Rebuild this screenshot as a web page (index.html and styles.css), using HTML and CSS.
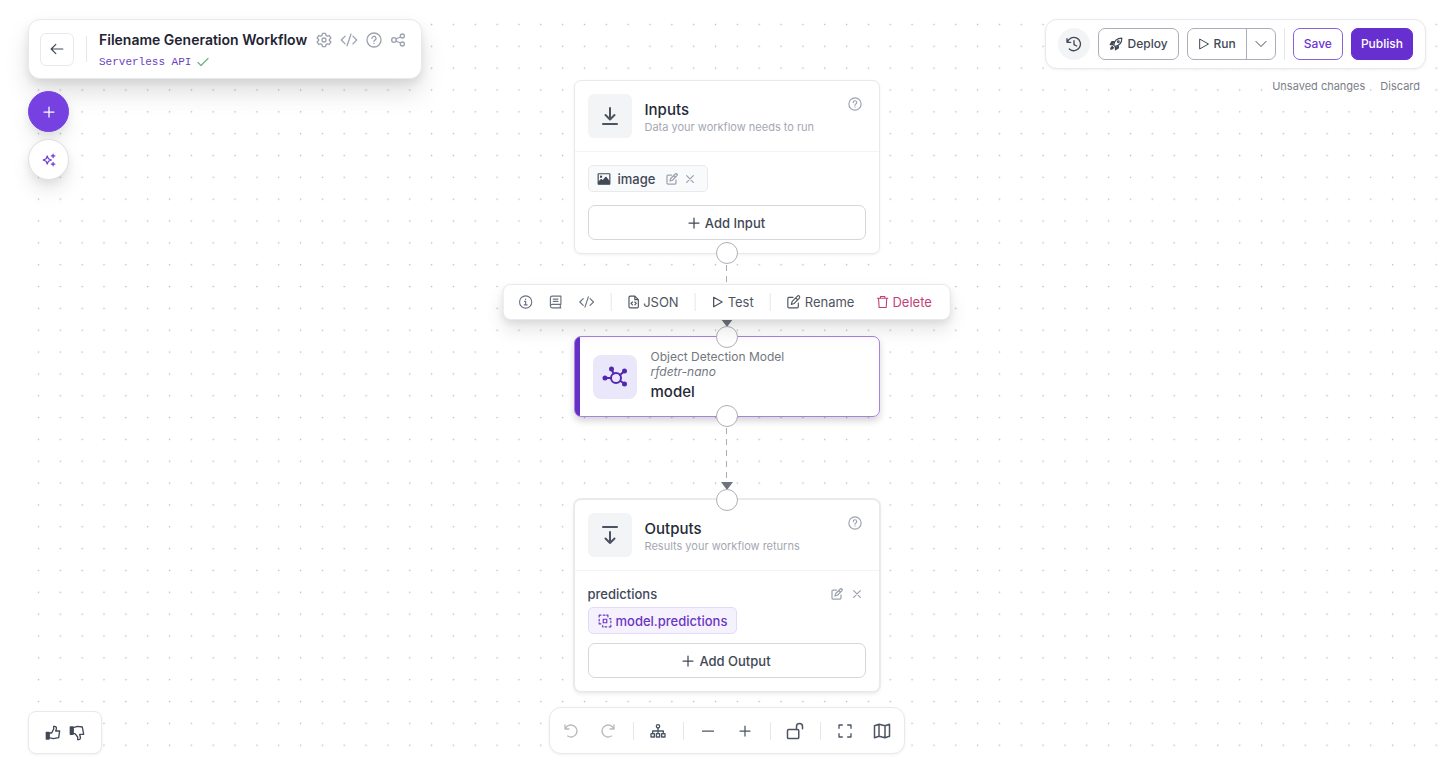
FILE: index.html
```html
<!DOCTYPE html>
<html lang="en">
<head>
<meta charset="utf-8">
<meta name="viewport" content="width=device-width, initial-scale=1">
<title>Filename Generation Workflow</title>
<link rel="stylesheet" href="styles.css">
</head>
<body>
<svg class="sprite" aria-hidden="true">
  <symbol id="i-help" viewBox="0 0 24 24"><circle cx="12" cy="12" r="10.500"/><path d="M9 9.600a3 3 0 1 1 4.400 2.500c-.9.5-1.400 1-1.400 2"/><path d="M12 17v.3"/></symbol>
  <symbol id="i-code" viewBox="0 0 28 24"><path d="M8 6l-6 6 6 6M20 6l6 6-6 6M17 3l-6 18"/></symbol>
  <symbol id="i-edit" viewBox="0 0 24 24"><path d="M11 4H4a2 2 0 0 0-2 2v14a2 2 0 0 0 2 2h14a2 2 0 0 0 2-2v-6"/><path d="M18.500 2a2.300 2.300 0 0 1 3.300 3.300L13 14.500l-5 1.500 1.500-5zM15.500 5l3.500 3.500"/></symbol>
  <symbol id="i-x" viewBox="0 0 24 24"><path d="M4 4l16 16M20 4L4 20"/></symbol>
  <symbol id="i-plus" viewBox="0 0 24 24"><path d="M12 2v20M2 12h20"/></symbol>
  <symbol id="i-play" viewBox="0 0 24 24"><path d="M4 2.500L21 12 4 21.500z"/></symbol>
</svg>

<div class="app">
  <svg class="dots" aria-hidden="true">
    <defs><pattern id="grid" width="21.84" height="21.84" patternUnits="userSpaceOnUse"><circle cx="10.500" cy="11.500" r=".8"/></pattern></defs>
    <rect width="100%" height="100%" fill="url(#grid)"/>
  </svg>

  <main class="flow">
    <section class="node">
      <header class="node-head">
        <span class="tile"><svg class="icon s20" viewBox="0 0 16 20"><path d="M8 2v11M3.500 9L8 13.500 12.500 9M1 18h14"/></svg></span>
        <div class="node-titles"><h2>Inputs</h2><p>Data your workflow needs to run</p></div>
        <button class="bare help" aria-label="Help"><svg class="icon s14"><use href="#i-help"/></svg></button>
      </header>
      <div class="node-body">
        <div class="chip">
          <svg class="icon s14" viewBox="0 0 24 24"><rect x="2" y="3" width="20" height="18" rx="1"/><path class="solid" d="M3 20v-3l4-4 3 2 5-6 6 7v4z"/><circle class="solid" cx="7" cy="8" r="1"/></svg>
          <span class="chip-name">image</span>
          <button class="bare" aria-label="Edit image"><svg class="icon s12"><use href="#i-edit"/></svg></button>
          <button class="bare" aria-label="Remove image"><svg class="icon s10"><use href="#i-x"/></svg></button>
        </div>
        <button class="add"><svg class="icon s12"><use href="#i-plus"/></svg>Add Input</button>
      </div>
      <i class="handle at-bottom"></i>
    </section>

    <div class="edge"><i class="line"></i><i class="arrow"></i>
      <div class="node-tools" role="toolbar" aria-label="Block actions">
        <button class="bare muted" aria-label="Info"><svg class="icon s14" viewBox="0 0 24 24"><circle cx="12" cy="12" r="10.500"/><path d="M12 7v.5M10 11h2v6M9.500 17h5"/></svg></button>
        <button class="bare muted" aria-label="Docs"><svg class="icon s14" viewBox="0 0 24 24"><path d="M21 16V2H6a3 3 0 0 0-3 3v14A3 3 0 0 0 6 22h15M21 16H6a3 3 0 0 0-3 3M20 16v6M8 7h8M8 11h8"/></svg></button>
        <button class="bare muted" aria-label="Code"><svg class="icon code-small"><use href="#i-code"/></svg></button>
        <i class="sep"></i>
        <button class="bare"><svg class="icon trash" viewBox="0 0 20 24"><path d="M12 2H4a2 2 0 0 0-2 2v16a2 2 0 0 0 2 2h12a2 2 0 0 0 2-2V8zM12 2v6h6M8 12l-2.500 2.500L8 17M12 12l2.500 2.500L12 17"/></svg>JSON</button>
        <i class="sep"></i>
        <button class="bare"><svg class="icon s12"><use href="#i-play"/></svg>Test</button>
        <i class="sep"></i>
        <button class="bare"><svg class="icon s14"><use href="#i-edit"/></svg>Rename</button>
        <button class="bare danger"><svg class="icon trash" viewBox="0 0 22 24"><path d="M1.500 5h19M7 5V2h8v3M3.500 5l1 17h13l1-17"/></svg>Delete</button>
      </div>
    </div>

    <section class="node model">
      <span class="tile violet"><svg class="icon net" viewBox="0 0 26 22"><circle cx="14" cy="12" r="5"/><path d="M3 12h6M9.500 3.500l2.200 4M22 5.500l-4 3.500M22 17.500l-3.500-2.500"/><circle class="solid" cx="3" cy="12" r="1.500"/><circle class="solid" cx="9.500" cy="3" r="1.500"/><circle class="solid" cx="22.500" cy="5" r="1.500"/><circle class="solid" cx="22.500" cy="18" r="1.500"/></svg></span>
      <div class="model-text"><p>Object Detection Model</p><p><em>rfdetr-nano</em></p><h2>model</h2></div>
      <i class="handle at-top"></i><i class="handle at-bottom"></i>
    </section>

    <div class="edge"><i class="line"></i><i class="arrow"></i></div>

    <section class="node outputs">
      <header class="node-head">
        <span class="tile"><svg class="icon s20" viewBox="0 0 16 20"><path d="M1 2h14M8 7v11M3.500 13.500L8 18l4.500-4.500"/></svg></span>
        <div class="node-titles"><h2>Outputs</h2><p>Results your workflow returns</p></div>
        <button class="bare help" aria-label="Help"><svg class="icon s14"><use href="#i-help"/></svg></button>
      </header>
      <div class="node-body tight">
        <div class="field">
          <span class="chip-name">predictions</span>
          <button class="bare" aria-label="Edit predictions"><svg class="icon s12"><use href="#i-edit"/></svg></button>
          <button class="bare" aria-label="Remove predictions"><svg class="icon s10"><use href="#i-x"/></svg></button>
        </div>
        <div class="chip ref">
          <svg class="icon s14" viewBox="0 0 24 24"><path d="M2 5V2h3M9 2h3M15 2h2v3M2 9v3M2 15v2h3M22 19v3h-3M15 22h-3M9 22H8v-2M22 15v-3M22 9V8h-2"/><rect x="9" y="9" width="6" height="6"/></svg>
          <span>model.predictions</span>
        </div>
        <button class="add"><svg class="icon s12"><use href="#i-plus"/></svg>Add Output</button>
      </div>
      <i class="handle at-top"></i>
    </section>
  </main>

  <div class="top">
    <div class="left">
      <div class="panel title-panel">
        <button class="back" aria-label="Back"><svg class="icon s14" viewBox="0 0 24 24"><path d="M22 12H3M10 4l-8 8 8 8"/></svg></button>
        <i class="sep tall"></i>
        <div class="title-text">
          <div class="title-row">
            <h1>Filename Generation Workflow</h1>
            <button class="bare" aria-label="Settings"><svg class="icon s16" viewBox="0 0 24 24"><path d="M9.700 2h4.600l.7 3 2 1.200 3-.9 2.300 4L20 11.400v1.200l2.300 2.100-2.300 4-3-.9-2 1.200-.7 3H9.700l-.7-3-2-1.200-3 .9-2.300-4L4 12.600v-1.200L1.700 9.300l2.300-4 3 .9L9 5z"/><circle cx="12" cy="12" r="3"/></svg></button>
            <button class="bare" aria-label="Code"><svg class="icon code"><use href="#i-code"/></svg></button>
            <button class="bare" aria-label="Help"><svg class="icon s16"><use href="#i-help"/></svg></button>
            <button class="bare" aria-label="Share"><svg class="icon s16" viewBox="0 0 24 24"><circle cx="6" cy="12" r="3.500"/><circle cx="18.500" cy="6" r="3"/><circle cx="18.500" cy="18" r="3"/><path d="M9 10.500l6.500-3M9 13.500l6.500 3"/></svg></button>
          </div>
          <a class="api" href="#api">Serverless API<svg class="icon s12 check" viewBox="0 0 24 24"><path d="M2 13l6 6L22 5"/></svg></a>
        </div>
      </div>
      <button class="round add-block" aria-label="Add block"><svg class="icon s12"><use href="#i-plus"/></svg></button>
      <button class="round ai" aria-label="Assistant"><svg class="icon s14" viewBox="0 0 24 24"><path d="M9 5l2 5 5 2-5 2-2 5-2-5-5-2 5-2zM19 2v6M16 5h6M19 16v6M16 19h6"/></svg></button>
    </div>
    <div class="right">
      <div class="panel actions">
        <button class="history" aria-label="Version history"><svg class="icon s16" viewBox="0 0 24 24"><path d="M1.500 4v5.500H7M2 9.500A10 10 0 1 1 5 19.500M12 7v6l4 2"/></svg></button>
        <button class="btn"><svg class="icon s14" viewBox="0 0 24 24"><path d="M8 14C9 7 14 2 22 2c0 8-5 13-12 14z"/><path class="solid" d="M9 8H5l-3 5h5M16 15v4l-5 3v-5M6 16c-3 1-3 5-3 5s4 0 5-3"/><circle cx="16" cy="8" r="1.500"/></svg>Deploy</button>
        <div class="split"><button><svg class="icon s12"><use href="#i-play"/></svg>Run</button><button class="more" aria-label="Run options"><svg class="icon s12" viewBox="0 0 24 24"><path d="M2 7l10 10L22 7"/></svg></button></div>
        <i class="sep tall"></i>
        <button class="btn save">Save</button>
        <button class="btn publish">Publish</button>
      </div>
      <div class="status"><span>Unsaved changes</span><a href="#discard">Discard</a></div>
    </div>
  </div>

  <div class="bottom-left panel">
    <button class="bare" aria-label="Good"><svg class="icon s16" viewBox="0 0 24 24"><path class="solid" d="M2 11h4v10H2z"/><path d="M6 12h4l3-6V2h1.500c2 0 3 2 2.500 4l-1 3h6l-1.500 10-8 1.500L6 19z"/></svg></button>
    <button class="bare" aria-label="Bad"><svg class="icon s16" viewBox="0 0 24 24"><path class="solid" d="M2 3h4v11H2z"/><path d="M6 4l7-2 7 1 2 11h-6l1 4c.5 2-.5 4-2.500 4H13v-4l-4-5H6z"/></svg></button>
  </div>

  <div class="view-tools panel" role="toolbar" aria-label="Canvas controls">
    <button class="bare off" aria-label="Undo"><svg class="icon s16" viewBox="0 0 24 24"><path d="M3 3v6h6M3.500 9A9 9 0 1 1 7 19.500"/></svg></button>
    <button class="bare off" aria-label="Redo"><svg class="icon s16" viewBox="0 0 24 24"><path d="M21 3v6h-6M20.500 9A9 9 0 1 0 17 19.500"/></svg></button>
    <i class="sep"></i>
    <button class="bare" aria-label="Auto layout"><svg class="icon s16" viewBox="0 0 24 24"><circle cx="12" cy="5" r="2.500"/><path d="M12 8v8M4 16v-4h16v4"/><rect x="1.500" y="16" width="5" height="5"/><rect x="9.500" y="16" width="5" height="5"/><rect x="17.500" y="16" width="5" height="5"/></svg></button>
    <i class="sep"></i>
    <button class="bare" aria-label="Zoom out"><svg class="icon s12" viewBox="0 0 24 24"><path d="M1 12h22"/></svg></button>
    <button class="bare" aria-label="Zoom in"><svg class="icon s12"><use href="#i-plus"/></svg></button>
    <i class="sep"></i>
    <button class="bare" aria-label="Lock"><svg class="icon s18" viewBox="0 0 24 24"><rect x="2" y="10" width="15" height="12" rx="1.500"/><path d="M14 10V6a4 4 0 0 1 8 0v3"/></svg></button>
    <i class="sep"></i>
    <button class="bare" aria-label="Fit view"><svg class="icon s16" viewBox="0 0 24 24"><path d="M3 8V3h5M16 3h5v5M21 16v5h-5M8 21H3v-5"/></svg></button>
    <button class="bare" aria-label="Map"><svg class="icon s18" viewBox="0 0 24 24"><path d="M2 5l6-2 8 2 6-2v16l-6 2-8-2-6 2zM8 3v16M16 5v16"/></svg></button>
  </div>
</div>
</body>
</html>
```

FILE: styles.css
```css
* { box-sizing: border-box; }
body { margin: 0; background: #fff; color: #414856; font: 13px/20px Inter, "Liberation Sans", sans-serif; }
h1, h2, p { margin: 0; font-weight: 500; }
button { font: inherit; color: inherit; margin: 0; padding: 0; cursor: pointer; }
a { color: inherit; text-decoration: none; }
.sprite { display: block; width: 0; height: 0; }

/* All layers share one grid cell */
.app { display: grid; min-height: 100vh; padding-left: 11px; }
.app > * { grid-area: 1 / 1; }
.dots { width: 100%; height: calc(100vh - 39px); margin: 13px 0 0; padding-left: 17px; fill: #b9bcc2; }

.icon { fill: none; stroke: currentColor; stroke-width: 2; stroke-linecap: round; stroke-linejoin: round; flex: none; display: block; }
.icon .solid { fill: currentColor; }
.s10 { width: 10px; height: 10px; stroke-width: 3; }
.s12 { width: 12px; height: 12px; stroke-width: 2.5; }
.s14 { width: 14px; height: 14px; }
.s16 { width: 16px; height: 16px; }
.s18 { width: 18px; height: 18px; }
.s20 { width: 16px; height: 20px; }
.code { width: 18px; height: 16px; }
.code-small { width: 16px; height: 14px; }
.trash { width: 12px; height: 14px; }
.net { width: 26px; height: 22px; }

.bare { display: flex; align-items: center; gap: 4px; border: 0; background: none; }
.panel { background: #fff; border: 1px solid #e8e9ec; border-radius: 12px; box-shadow: 0 1px 3px rgba(0, 0, 0, .06); }
.sep { width: 1px; height: 18px; background: #e5e7eb; flex: none; }
.sep.tall { height: 32px; }

/* Top bar */
.top { display: flex; justify-content: space-between; align-items: flex-start; align-self: start; padding: 19px 16px 0 17px; }
.left { display: flex; flex-direction: column; align-items: flex-start; gap: 7px; }
.title-panel { display: flex; align-items: center; gap: 12px; height: 60px; padding: 0 15px 0 11px; margin-bottom: 5px; box-shadow: 0 14px 24px rgba(0, 0, 0, .12), 0 4px 8px rgba(0, 0, 0, .08); }
.title-panel .sep { height: 26px; }
.title-text { padding-top: 2px; }
.back { display: grid; place-items: center; width: 34px; height: 33px; background: #fff; border: 1px solid #e8e9ee; border-radius: 6px; }
.title-row { display: flex; align-items: center; gap: 8px; color: #9ca3af; }
h1 { margin-right: 1px; font-size: 14px; line-height: 24px; font-weight: 600; color: #1f2433; }
.api { display: flex; align-items: center; gap: 6px; font: 11px/20px "Liberation Mono", monospace; color: #6b3fc0; }
.check { color: #6db584; }
.round { display: grid; place-items: center; width: 41px; height: 41px; border: 1px solid #dedfe3; border-radius: 50%; background: #fff; color: #6c35d4; box-shadow: 0 12px 20px rgba(0, 0, 0, .08), 0 4px 8px rgba(0, 0, 0, .07); }
.add-block { background: #7741e2; border-color: #7741e2; color: #fff; }

.right { display: flex; flex-direction: column; align-items: flex-end; gap: 7px; }
.actions { display: flex; align-items: center; gap: 8px; height: 50px; padding: 0 12px; font-size: 12px; font-weight: 500; }
.history { display: grid; place-items: center; width: 32px; height: 32px; border: 0; border-radius: 50%; background: #f3f4f6; }
.btn { display: flex; align-items: center; gap: 5px; height: 32px; padding: 0 10px; border: 1px solid #abaeb8; border-radius: 7px; background: #fff; }
.save { color: #6c35d4; border-color: #8a62d6; }
.publish { color: #fff; background: #682fd0; border-color: #682fd0; padding: 0 9px; }
.split { display: flex; height: 32px; border: 1px solid #abaeb8; border-radius: 7px; }
.split button { display: flex; align-items: center; gap: 4px; border: 0; background: none; padding: 0 10px; }
.split .more { padding: 0 8px; border-left: 1px solid #abaeb8; }
.split .s12 { stroke-width: 2; }
.status { display: flex; gap: 15px; padding-right: 6px; font-size: 11px; color: #7b7f88; }

/* Workflow column */
.flow { display: flex; flex-direction: column; align-items: center; padding-top: 80px; }
.node { position: relative; width: 306px; background: #fff; border: 1px solid #e8e9ec; border-radius: 7px; box-shadow: 0 1px 3px rgba(0, 0, 0, .06); }
.outputs { box-shadow: 0 0 0 1px #ebecef, 0 2px 4px rgba(0, 0, 0, .08); }
.node-head { display: flex; gap: 13px; padding: 13px; border-bottom: 1px solid #f3f4f6; }
.tile { display: grid; place-items: center; width: 44px; height: 44px; border-radius: 6px; background: #f3f4f6; color: #4b5260; flex: none; }
.tile.violet { background: #ebe7fb; color: #5427b0; border-radius: 8px; }
.node-titles { flex: 1; padding-top: 5px; }
h2 { font-size: 15px; line-height: 22px; color: #242a38; }
.node-titles p { font-size: 11px; line-height: 12px; color: #a5a8b3; font-weight: 400; }
.help { align-self: flex-start; margin: 3px 4px 0 0; color: #9ca3af; }
.node-body { display: flex; flex-direction: column; align-items: flex-start; gap: 13px; padding: 13px; }
.node-body.tight { gap: 9px; }
.chip { display: flex; align-items: center; gap: 7px; height: 27px; padding: 0 12px 0 8px; border: 1px solid #e8eaee; border-radius: 5px; background: #f9fafb; }
.node .bare { color: #9ca3af; }
.chip-name { font-weight: 500; margin-right: 4px; }
.ref { gap: 4px; padding: 0 9px; color: #6c35c4; background: #f5f2fe; border-color: #e2daf9; font-weight: 500; }
.field { display: flex; align-items: center; align-self: stretch; gap: 9px; padding-right: 4px; margin-bottom: -6px; height: 20px; }
.field .chip-name { flex: 1; }
.add { display: flex; align-items: center; justify-content: center; gap: 5px; align-self: stretch; height: 35px; border: 1px solid #d5d7dc; border-radius: 7px; background: #fff; font-weight: 500; }
.handle { position: absolute; left: 50%; width: 22px; height: 22px; margin-left: -11px; border: 1px solid #adb0b6; border-radius: 50%; background: #fff; z-index: 2; }
.handle.at-top { top: -11px; }
.handle.at-bottom { bottom: -11px; }

.model { display: flex; align-items: center; gap: 14px; height: 81px; padding-left: 18px; border-color: #a583df; background: linear-gradient(to right, #6530c6 5px, #fff 5px); box-shadow: 0 4px 7px rgba(0, 0, 0, .17); }
.model p { font-size: 12px; line-height: 15px; font-weight: 400; color: #74777f; }
.model h2 { line-height: 26px; }

.edge { position: relative; display: flex; flex-direction: column; align-items: center; align-self: stretch; height: 82px; }
.line { flex: 1; width: 1px; background: repeating-linear-gradient(#aaadb5 0 6px, transparent 6px 11px); }
.arrow { border: 6px solid transparent; border-top: 8px solid #6f737d; border-bottom: 0; margin-bottom: 9px; }
.node-tools { position: absolute; top: 30px; left: 50%; transform: translateX(-50%); z-index: 3; display: flex; align-items: center; gap: 16px; height: 36px; padding: 0 18px 0 15px; border: 1px solid #e8e9ec; border-radius: 8px; background: #fff; color: #4f555f; white-space: nowrap; box-shadow: 0 10px 18px rgba(0, 0, 0, .1), 0 3px 6px rgba(0, 0, 0, .07); }
.muted { color: #6b7280; }
.danger { color: #c23f77; margin-left: 6px; }

/* Bottom bar */
.bottom-left { display: flex; align-items: center; gap: 8px; align-self: end; justify-self: start; height: 43px; padding: 0 16px; margin: 0 0 28px 17px; border-radius: 8px; }
.view-tools { display: flex; align-items: center; justify-self: center; align-self: end; gap: 12px; height: 47px; padding: 0 9px; margin-bottom: 28px; color: #4b5563; }
.view-tools .bare { width: 25px; justify-content: center; }
.view-tools .off { color: #b9bbc0; }
```
